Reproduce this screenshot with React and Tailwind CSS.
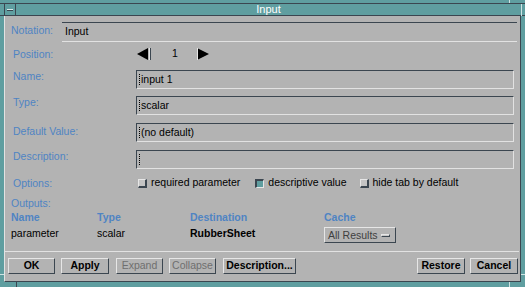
import React from "react";

function Cursor() {
  return <span className="inline-block w-0 h-[11px] border-l border-dotted border-black mr-[1px]" />;
}

function Field({ children }) {
  return (
    <div className="flex-1 h-[19px] flex items-center pl-[2px] border-t border-l border-r border-b border-t-[#3b4650] border-l-[#3b4650] border-r-[#e2e2e2] border-b-[#e2e2e2] text-black">
      <Cursor />
      {children}
    </div>
  );
}

function Label({ children, className = "" }) {
  return <div className={`w-[125px] shrink-0 leading-[12px] text-[#4f84c3] ${className}`}>{children}</div>;
}

function Check({ checked, children }) {
  return (
    <div className="flex items-center">
      {checked ? (
        <span className="w-[9px] h-[9px] bg-[#5f9ea0] border-t-2 border-l-2 border-b border-r border-t-[#3b4650] border-l-[#3b4650] border-b-[#e6e6e6] border-r-[#e6e6e6]" />
      ) : (
        <span className="w-[9px] h-[9px] bg-[#c4c4c4] border-t border-l border-b-2 border-r-2 border-t-[#e6e6e6] border-l-[#e6e6e6] border-b-[#3b4650] border-r-[#3b4650]" />
      )}
      <span className="ml-[4px] text-black">{children}</span>
    </div>
  );
}

function Btn({ className = "", disabled, children }) {
  return (
    <div
      className={`h-[16px] flex items-center justify-center border-t border-l border-b border-r border-t-[#e6e6e6] border-l-[#e6e6e6] border-b-[#3b4650] border-r-[#3b4650] ${
        disabled ? "text-[#6f6f6f]" : "text-black font-bold"
      } ${className}`}
    >
      {children}
    </div>
  );
}

export default function App() {
  return (
    <div className="w-[525px] h-[287px] bg-[#5f9ea0] relative overflow-hidden font-['Liberation_Sans',Arial,sans-serif] text-[10.5px]">
      {/* frame corner marks */}
      <div className="absolute left-[509px] top-0 w-px h-[3px] bg-[#cfe3e3]" />
      <div className="absolute left-[509px] bottom-0 w-px h-[5px] bg-[#cfe3e3]" />
      <div className="absolute left-[16px] bottom-0 w-px h-[5px] bg-[#3b4650]" />
      <div className="absolute left-0 top-[274px] w-[4px] h-px bg-[#cfe3e3]" />
      <div className="absolute right-0 top-[274px] w-[4px] h-px bg-[#cfe3e3]" />
      <div className="absolute right-[3px] top-[4px] w-px h-[12px] bg-[#cfe3e3]" />

      {/* Title bar */}
      <div className="h-[3px]" />
      <div className="h-[13px] border-t border-b border-[#3b4650] flex">
        <div className="w-[16px] shrink-0 flex pl-[4px]">
          <div className="w-[12px] h-full border-l border-r border-[#3b4650] flex items-center justify-center">
            <span className="w-[6px] h-[2px] bg-[#d8eaea] border-b border-[#3b4650]" />
          </div>
        </div>
        <div className="flex-1 flex items-center justify-center text-white text-[11px] leading-none pr-[4px]">
          Input
        </div>
      </div>

      {/* Content */}
      <div className="ml-[4px] w-[517px] h-[266px] bg-[#b3b3b3] border-l border-r border-b border-l-[#e2e2e2] border-r-[#3b4650] border-b-[#3b4650] flex flex-col">
        <div className="pl-[6px] pr-[3px]">
          {/* Notation */}
          <div className="flex items-start mt-[6px]">
            <div className="w-[51px] shrink-0 leading-[12px] mt-[2px] text-[#4f84c3]">Notation:</div>
            <div className="flex-1 h-[20px] flex items-center pl-[3px] border-t border-b border-t-[#3b4650] border-b-[#e2e2e2] text-black">
              Input
            </div>
          </div>

          {/* Position */}
          <div className="flex items-center h-[24px]">
            <Label className="pl-[2px]">Position:</Label>
            <svg width="15" height="12" viewBox="0 0 15 12" className="ml-[1px]">
              <polygon points="0,6 11,0 11,12" fill="#000" />
              <rect x="12" y="0" width="1" height="12" fill="#e6e6e6" />
              <rect x="13" y="0" width="1" height="12" fill="#3b4650" />
            </svg>
            <span className="ml-[20px] text-black">1</span>
            <svg width="13" height="12" viewBox="0 0 13 12" className="ml-[19px]">
              <polygon points="0,0 12,6 0,12" fill="#000" />
              <line x1="0.5" y1="0" x2="0.5" y2="12" stroke="#e6e6e6" strokeWidth="1" />
            </svg>
          </div>

          {/* Name */}
          <div className="flex items-start mt-[4px] pr-[3px]">
            <Label className="pl-[2px]">Name:</Label>
            <Field>input 1</Field>
          </div>
          <div className="flex items-start mt-[7px] pr-[3px]">
            <Label className="pl-[2px]">Type:</Label>
            <Field>scalar</Field>
          </div>
          <div className="flex items-start mt-[8px] pr-[3px]">
            <Label className="pl-[2px] mt-[2px]">Default Value:</Label>
            <Field>(no default)</Field>
          </div>
          <div className="flex items-start mt-[8px] pr-[3px]">
            <Label className="pl-[2px]">Description:</Label>
            <Field />
          </div>

          {/* Options */}
          <div className="flex items-center mt-[8px] h-[12px]">
            <Label className="pl-[2px]">Options:</Label>
            <div className="flex items-center pl-[2px] gap-[6px]">
              <Check>required parameter</Check>
              <span className="w-[3px]" />
              <Check checked>descriptive value</Check>
              <span className="w-[1px]" />
              <Check>hide tab by default</Check>
            </div>
          </div>

          {/* Outputs */}
          <div className="mt-[8px] leading-[12px] text-[#4f84c3]">Outputs:</div>
          <div className="flex mt-[2px] leading-[12px] text-[#4f84c3] font-bold">
            <div className="w-[86px]">Name</div>
            <div className="w-[93px]">Type</div>
            <div className="w-[134px]">Destination</div>
            <div>Cache</div>
          </div>
          <div className="flex items-start mt-[3px] h-[17px] leading-[12px] text-black">
            <div className="w-[86px] mt-[1px]">parameter</div>
            <div className="w-[93px] mt-[1px]">scalar</div>
            <div className="w-[134px] mt-[1px] font-bold">RubberSheet</div>
            <div className="w-[72px] h-[16px] mt-[1px] flex items-center justify-between pl-[3px] pr-[5px] border-t border-l border-b border-r border-t-[#e6e6e6] border-l-[#e6e6e6] border-b-[#3b4650] border-r-[#3b4650] text-[#3f3f3f]">
              <span>All Results</span>
              <span className="w-[9px] h-[3px] bg-[#c8c8c8] border-t border-l border-b border-r border-t-[#e6e6e6] border-l-[#e6e6e6] border-b-[#3b4650] border-r-[#3b4650]" />
            </div>
          </div>
        </div>

        {/* Separator */}
        <div className="mt-[8px] mr-[1px] h-px bg-[#e2e2e2]" />

        {/* Buttons */}
        <div className="flex items-center mt-[6px] pl-[3px] pr-[2px]">
          <Btn className="w-[47px]">OK</Btn>
          <Btn className="w-[48px] ml-[6px]">Apply</Btn>
          <Btn className="w-[47px] ml-[7px]" disabled>Expand</Btn>
          <Btn className="w-[47px] ml-[6px]" disabled>Collapse</Btn>
          <Btn className="w-[73px] ml-[7px]">Description...</Btn>
          <div className="flex-1" />
          <Btn className="w-[48px]">Restore</Btn>
          <Btn className="w-[48px] ml-[5px]">Cancel</Btn>
        </div>
      </div>
    </div>
  );
}
